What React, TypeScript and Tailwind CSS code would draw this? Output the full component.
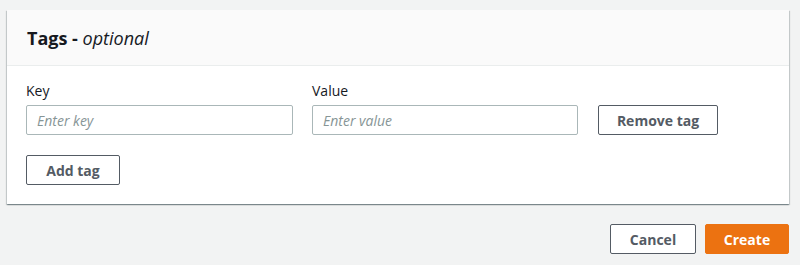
const App: React.FC = () => {
    return (
        <div className="min-h-[265px] bg-[#f2f3f3] pt-[10px] pl-[7px] pr-[11px] font-['Open_Sans',sans-serif] text-[#16191f]">
            <div className="bg-white shadow-[0_1px_1px_0_rgba(0,28,36,0.3),1px_1px_1px_0_rgba(0,28,36,0.15),-1px_1px_1px_0_rgba(0,28,36,0.15)]">
                <div className="h-[56px] flex items-center px-[20px] bg-[#fafafa] border-b border-[#eaeded]">
                    <h2 className="text-[18px] font-bold leading-none">
                        Tags - <i className="font-medium">optional</i>
                    </h2>
                </div>
                <div className="pt-[14px] pb-[19px] px-[19px]">
                    <div className="flex items-end">
                        <div className="w-[267px]">
                            <label className="block text-[14px] leading-[22px] mb-[3px]">Key</label>
                            <input
                                placeholder="Enter key"
                                className="w-full h-[30px] border border-[#aab7b8] rounded-[2px] px-[10px] text-[14px] italic placeholder:text-[#879596] outline-none"
                            />
                        </div>
                        <div className="w-[266px] ml-[19px]">
                            <label className="block text-[14px] leading-[22px] mb-[3px]">Value</label>
                            <input
                                placeholder="Enter value"
                                className="w-full h-[30px] border border-[#aab7b8] rounded-[2px] px-[10px] text-[14px] italic placeholder:text-[#879596] outline-none"
                            />
                        </div>
                        <button className="ml-[20px] w-[120px] h-[30px] border border-[#545b64] rounded-[2px] bg-white text-[14px] font-bold text-[#545b64]">
                            Remove tag
                        </button>
                    </div>
                    <button className="mt-[20px] w-[94px] h-[30px] border border-[#545b64] rounded-[2px] bg-white text-[14px] font-bold text-[#545b64]">
                        Add tag
                    </button>
                </div>
            </div>
            <div className="flex justify-end gap-[9px] mt-[20px]">
                <button className="w-[86px] h-[30px] border border-[#545b64] rounded-[2px] bg-white text-[14px] font-bold text-[#545b64]">
                    Cancel
                </button>
                <button className="w-[84px] h-[30px] border border-[#ec7211] rounded-[2px] bg-[#ec7211] text-[14px] font-bold text-white">
                    Create
                </button>
            </div>
        </div>
    );
};

export default App;
